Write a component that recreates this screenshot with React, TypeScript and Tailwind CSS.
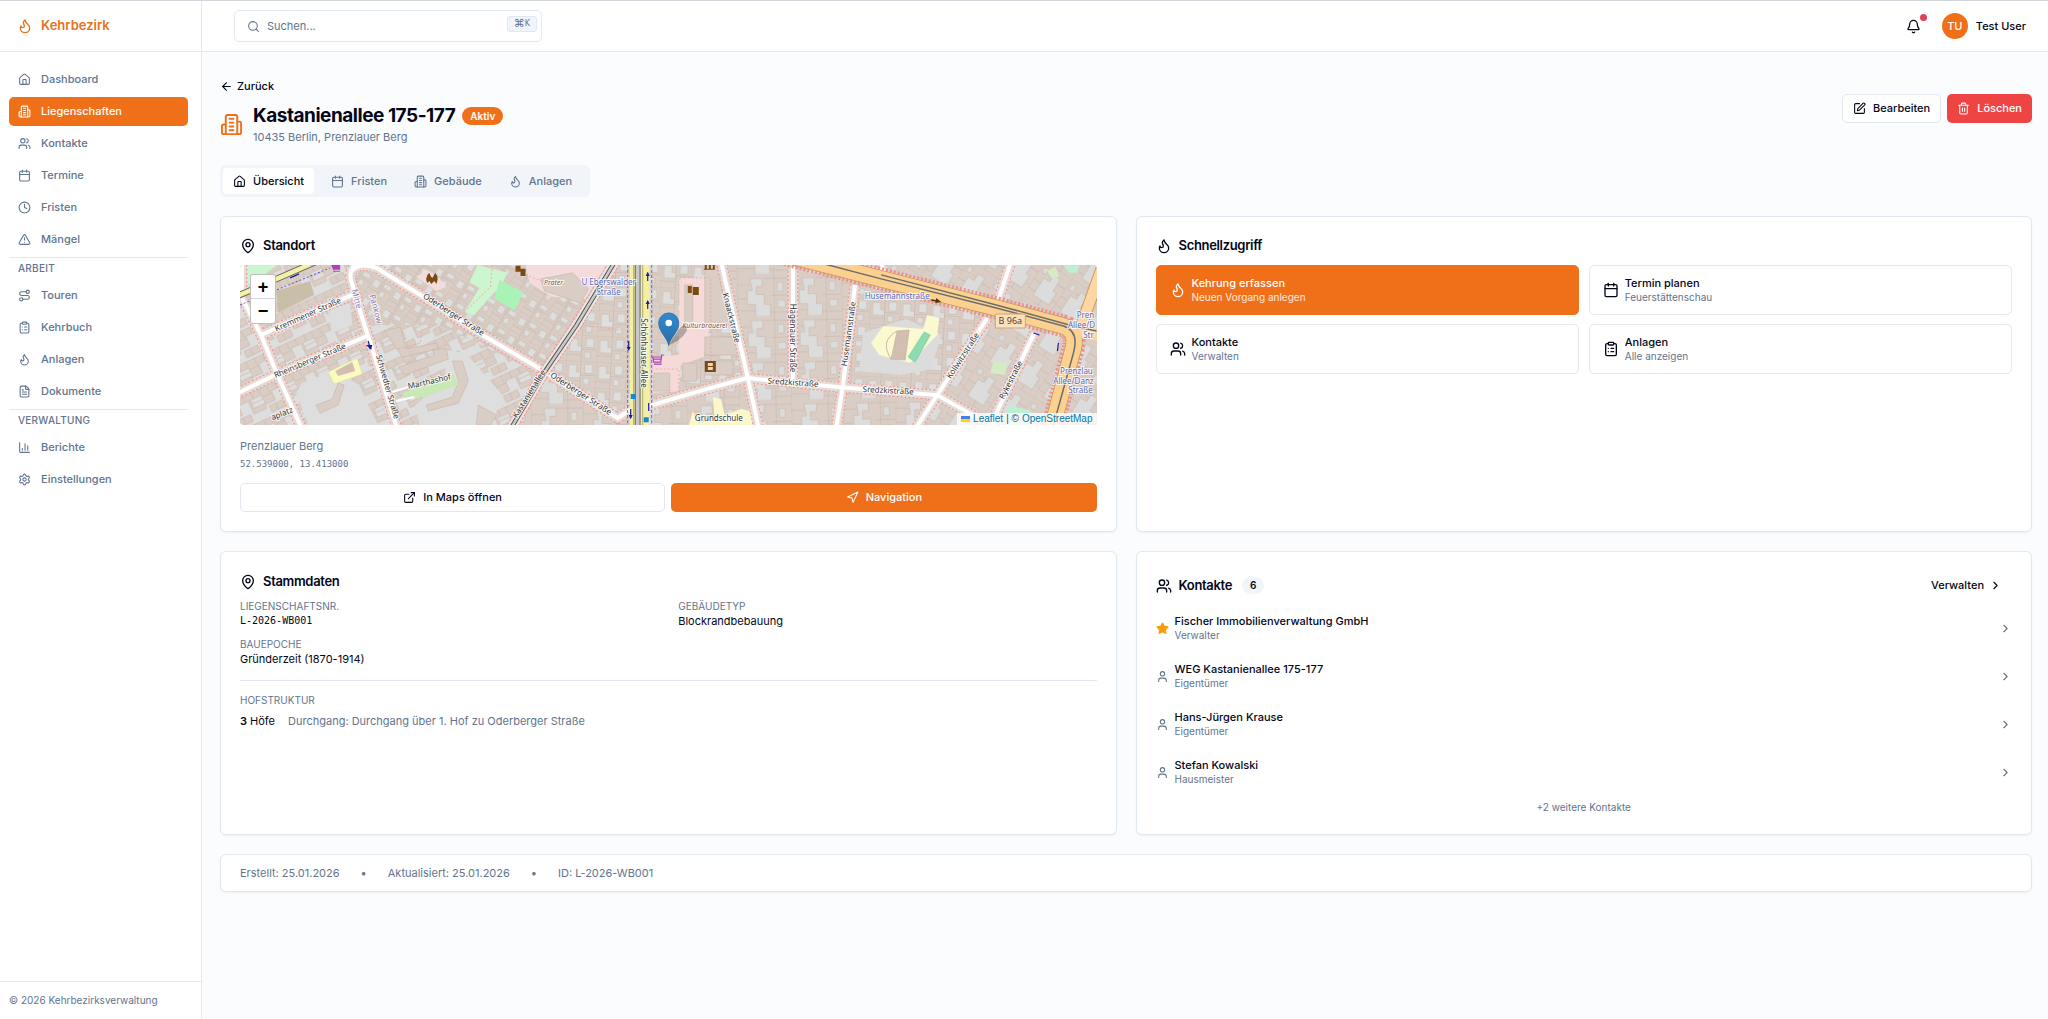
import React from 'react';
import {
  ArrowLeft, Bell, Calendar, ChartColumn, ChevronRight, ClipboardList, Clock, ExternalLink, FileText,
  Flame, House, MapPin, Navigation, Route, Search, Settings, SquarePen, Star, Trash2, TriangleAlert, User, Users,
} from 'lucide-react';

type Icon = React.ComponentType<{ className?: string }>;

function Building({ className }: { className?: string }) {
  return (
    <svg viewBox="0 0 24 24" fill="none" stroke="currentColor" strokeWidth="2" strokeLinecap="round" strokeLinejoin="round" className={className} aria-hidden="true">
      <path d="M6 22V4a2 2 0 0 1 2-2h8a2 2 0 0 1 2 2v18Z" />
      <path d="M6 12H4a2 2 0 0 0-2 2v6a2 2 0 0 0 2 2h2" />
      <path d="M18 9h2a2 2 0 0 1 2 2v9a2 2 0 0 1-2 2h-2" />
      <path d="M10 6h4M10 10h4M10 14h4M10 18h4" />
    </svg>
  );
}

const navGroups: { title?: string; items: { label: string; icon: Icon; active?: boolean }[] }[] = [
  {
    items: [
      { label: 'Dashboard', icon: House },
      { label: 'Liegenschaften', icon: Building, active: true },
      { label: 'Kontakte', icon: Users },
      { label: 'Termine', icon: Calendar },
      { label: 'Fristen', icon: Clock },
      { label: 'Mängel', icon: TriangleAlert },
    ],
  },
  {
    title: 'ARBEIT',
    items: [
      { label: 'Touren', icon: Route },
      { label: 'Kehrbuch', icon: ClipboardList },
      { label: 'Anlagen', icon: Flame },
      { label: 'Dokumente', icon: FileText },
    ],
  },
  {
    title: 'VERWALTUNG',
    items: [
      { label: 'Berichte', icon: ChartColumn },
      { label: 'Einstellungen', icon: Settings },
    ],
  },
];

function Sidebar() {
  return (
    <aside className="flex w-[202px] shrink-0 flex-col border-r border-slate-200 bg-white">
      <div className="flex h-[51px] items-center gap-2 border-b border-slate-200 px-[17px] text-[#e8711c]">
        <Flame className="size-4" />
        <span className="text-[13px] font-semibold">Kehrbezirk</span>
      </div>
      <nav className="flex-1 pt-[13px] pr-[13px] pl-[9px]">
        {navGroups.map((g, i) => (
          <div key={i} className={i ? 'mt-[3px] border-t border-slate-200' : ''}>
            {g.title && <h2 className="mb-[3px] pl-[9px] text-[10px] leading-5 font-medium tracking-wide text-slate-500">{g.title}</h2>}
            <ul className="flex flex-col gap-[3px]">
              {g.items.map(({ label, icon: I, active }) => (
                <li key={label}>
                  <a href="#" className={`flex h-[29px] items-center gap-[10px] rounded-[5px] px-[9px] text-[11px] font-medium ${active ? 'bg-[#f0701a] text-white' : 'text-slate-500'}`}>
                    <I className="size-[13px]" />
                    {label}
                  </a>
                </li>
              ))}
            </ul>
          </div>
        ))}
      </nav>
      <div className="border-t border-slate-200 px-[9px] py-3 text-[10px] leading-[13px] text-slate-500">© 2026 Kehrbezirksverwaltung</div>
    </aside>
  );
}

function Header() {
  return (
    <header className="flex h-[51px] items-center justify-between border-b border-slate-200 bg-white pr-[22px] pl-8">
      <label className="flex h-8 w-[308px] items-center gap-[7px] rounded-[5px] border border-slate-200 bg-white pr-1 pl-3 text-slate-500">
        <Search className="size-[13px]" />
        <input aria-label="Suchen" placeholder="Suchen..." className="min-w-0 flex-1 text-[11px] outline-none placeholder:text-slate-500" />
        <kbd className="mb-1 flex h-4 items-center rounded-[3px] border border-slate-200 bg-slate-100 px-[6px] font-['DejaVu_Sans',monospace] text-[11px] text-slate-500">⌘<span className="text-[8px]">K</span></kbd>
      </label>
      <div className="flex items-center gap-[19px]">
        <button aria-label="Benachrichtigungen" className="relative p-[2px]">
          <Bell className="size-[15px]" />
          <span className="absolute -top-[3px] -right-[4px] size-[7px] rounded-full bg-[#e0405a]" />
        </button>
        <button className="flex items-center gap-2 text-[11px] font-medium">
          <span className="flex size-[26px] items-center justify-center rounded-full bg-[#f0701a] text-white">TU</span>
          Test User
        </button>
      </div>
    </header>
  );
}

function Card({ children, className = '' }: { children: React.ReactNode; className?: string }) {
  return <section className={`rounded-[6px] border border-slate-200 bg-white px-[19px] shadow-xs ${className}`}>{children}</section>;
}

function CardTitle({ icon: I, children }: { icon: Icon; children: React.ReactNode }) {
  return (
    <h2 className="flex h-5 items-center gap-[7px] text-[13px] font-semibold tracking-tight">
      <I className="size-4" />
      {children}
    </h2>
  );
}

const streets = [
  'M2 -4L2 33L21 70L37 109L62 164',
  'M21 70L112 30',
  'M-4 129L37 109L127 71',
  'M118 -4Q108 4 111 16L122 53L134 90L157 164',
  'M112 6Q118 -3 136 3L185 33L242 70L305 107L377 153L389 145L411 140L455 127L506 113L596 122L696 130L735 152',
  'M480 -4L507 113L518 164',
  'M552 2L552 116',
  'M614 20L602 120L595 164',
  'M746 53L696 130L674 164',
  'M770 -4L756 38',
  'M793 68L754 150L750 164',
  'M640 -4L642 8',
];

const blocks: { d: string; fill: string }[] = [
  { d: 'M0 0H120L111 16L134 90L157 164H0Z', fill: 'url(#west)' },
  { d: 'M120 0H375L302 110L272 164H157L134 90L111 16Z', fill: 'url(#diag)' },
  { d: 'M157 164L134 90L128 60L200 60L302 110L272 164Z', fill: 'url(#west)' },
  { d: 'M375 0H480L507 113L377 153L302 110Z', fill: 'url(#grid)' },
  { d: 'M480 0H620L614 20L602 120L506 113Z', fill: 'url(#court)' },
  { d: 'M614 10L746 53L696 130L602 120Z', fill: 'url(#grid)' },
  { d: 'M272 164L305 107L377 153L506 113L696 130L674 164Z', fill: 'url(#court)' },
  { d: 'M600 0H860V160H674L696 130L746 53Z', fill: 'url(#east)' },
];

function Label({ x, y, r = 0, children, fill = '#333', size = 8, italic }: { x: number; y: number; r?: number; children: string; fill?: string; size?: number; italic?: boolean }) {
  return (
    <text transform={`translate(${x} ${y}) rotate(${r})`} textAnchor="middle" dominantBaseline="middle" fontSize={size} fontStyle={italic ? 'italic' : 'normal'} fill={fill} stroke="#fff" strokeOpacity="0.75" strokeWidth="2" paintOrder="stroke" fontFamily="'Noto Sans', sans-serif">
      {children}
    </text>
  );
}

function CityMap() {
  return (
    <svg viewBox="0 0 855 160" preserveAspectRatio="xMidYMid slice" className="block h-full w-full" role="img" aria-label="Karte Prenzlauer Berg">
      <defs>
        <pattern id="west" width="36" height="30" patternUnits="userSpaceOnUse" patternTransform="rotate(-25)">
          <path fill="#dedede" d="M0 0h36v30H0z" />
          <path fill="#d9cdc5" stroke="#c7b6aa" strokeWidth=".6" d="M0 0h36v7H24v9h12v5H22V7H11v10H0zM3 20h15v7H3z" />
          <path fill="none" stroke="#c7b6aa" strokeWidth=".6" d="M9 0v7M18 0v7M28 0v7M0 9h11M24 11h12M10 20v7" />
        </pattern>
        <pattern id="diag" width="24" height="21" patternUnits="userSpaceOnUse" patternTransform="rotate(31)">
          <path fill="#d9cdc5" d="M0 0h24v21H0z" />
          <path fill="#dedede" stroke="#c7b6aa" strokeWidth=".6" d="M3 5h7v8H3zM14 4h8v5h-8zM14 13h5v6h-5z" />
          <path fill="none" stroke="#c7b6aa" strokeWidth=".6" d="M0 0h24M12 0v21M0 16h12M0 0v21M12 11h12" />
        </pattern>
        <pattern id="grid" width="30" height="26" patternUnits="userSpaceOnUse" patternTransform="rotate(3)">
          <path fill="#d9cdc5" d="M0 0h30v26H0z" />
          <path fill="#dedede" stroke="#c7b6aa" strokeWidth=".6" d="M3 4h8v7h4v6H3zM19 3h8v9h-8zM18 17h6v6h-6z" />
          <path fill="none" stroke="#c7b6aa" strokeWidth=".6" d="M0 0h30M15 0v26M0 20h15M0 0v26M15 14h15" />
        </pattern>
        <pattern id="court" width="52" height="42" patternUnits="userSpaceOnUse" patternTransform="translate(496 10) rotate(-1)">
          <path fill="#d9cdc5" d="M0 0h52v42H0z" />
          <path fill="#dcdcdc" stroke="#c7b6aa" strokeWidth=".6" d="M13 4h12v8h-6v8h8v10h6v12H18V30h-8V16h5zM40 8h6v9h-6zM40 26h8v7h-8z" />
          <path fill="none" stroke="#c7b6aa" strokeWidth=".6" d="M0 0v42M0 10h13M0 24h10M0 36h18M26 4h26M33 21h19M33 38h19M37 0v42" />
        </pattern>
        <pattern id="east" width="40" height="32" patternUnits="userSpaceOnUse" patternTransform="rotate(-57)">
          <path fill="#d9cdc5" d="M0 0h40v32H0z" />
          <path fill="#dcdcdc" stroke="#c7b6aa" strokeWidth=".6" d="M6 8h20v7h8v8H20v4H6zM30 3h6v5h-6z" />
          <path fill="none" stroke="#c7b6aa" strokeWidth=".6" d="M0 0h40M0 0v32M10 0v8M20 0v8M30 15v-4M0 18h6M12 27v5M28 23v9" />
        </pattern>
        <linearGradient id="pin" x1="0" y1="0" x2="0" y2="1">
          <stop offset="0" stopColor="#2f8bd0" />
          <stop offset="1" stopColor="#2a6da6" />
        </linearGradient>
      </defs>
      <path fill="#e0dfdf" d="M0 0h855v160H0z" />
      {blocks.map((b) => <path key={b.d} d={b.d} fill={b.fill} />)}

      {/* open ground and apartment slabs west of Schwedter Straße and south of Oderberger */}
      <path fill="#dedede" d="M62 118L98 104L118 120L140 164H70L56 128ZM205 85L225 88L262 130L250 164H180L175 140L205 118ZM88 45L110 38L112 60L92 68Z" />
      <path fill="#d9cdc5" stroke="#c7b6aa" strokeWidth=".6" d="M76 140L92 134L98 118L104 120L98 140L80 148ZM144 66L160 62L166 84L196 78L198 84L162 92ZM158 102L194 90L192 84L206 84L208 94L164 110ZM212 96L222 96L228 116L218 138L188 146L186 140L212 132L218 116ZM238 140L256 150L250 160H236Z" />
      <path fill="#c9f5cf" d="M0 0H38L20 12L4 22L0 22Z" />
      <path fill="#c9bfa9" d="M36 26L70 16L74 30L38 48Z" />
      <path fill="#fbfbc0" stroke="#e0dca0" strokeWidth=".6" d="M88 107L117 93L122 109L94 119Z" />
      <path fill="#d3bfb2" d="M95 106L112 97L115 106L98 111Z" />
      <path fill="#cdf5cf" d="M237 0L267 8L262 18L234 50L224 47L239 23L229 17Z" />
      <path fill="#a8f3b5" d="M259 15L283 27L274 45L254 34Z" />
      <path fill="#c9e8b5" d="M163 128L213 109L218 120L184 132L164 134Z" />
      <path fill="#f5dcdc" d="M285 0H366L345 34L312 32L289 18ZM186 5Q200 12 206 22L196 26L176 12Z" />
      <path fill="#d9cdc5" stroke="#c7b6aa" strokeWidth=".6" d="M300 14L332 8L348 24L340 38L304 26Z" />
      <path fill="#f6dada" d="M439 13H470V56L463 92L440 100L438 126L411 128V92L438 90Z" />
      <path fill="#d9cdc5" stroke="#c7b6aa" strokeWidth=".6" d="M444 20h8v40h-8zM464 96h28v14h-28zM413 108h16v18h-16zM442 98h14v18h-14zM464 0h12l12 60h-24zM464 72h34l5 18h-39z" />
      <path fill="#fbf7c9" d="M472 132L480 134L484 150L500 144L510 146L512 160H448L452 146L458 158L474 154Z" />
      <path fill="#dcdcdc" d="M622 68L665 54L700 70L690 104L660 110L618 106Z" />
      <path fill="#fbf9d0" d="M642 61L682 64L686 50L698 53L696 70L669 98L638 90L630 78Z" />
      <path fill="#d3bfb2" stroke="#bda99a" strokeWidth=".6" d="M656 66L668 65L664 95L650 94Z" />
      <path fill="none" stroke="#bda99a" strokeWidth=".8" d="M656 66Q638 76 650 94" />
      <path fill="#8fdcb2" stroke="#63c792" strokeWidth=".6" d="M683 67L689 70L674 97L667 92Z" />
      <path fill="#d5ebc5" d="M752 96L766 98L764 110L749 108ZM806 6L814 2L818 12L810 13Z" />
      <path fill="#bdf0d0" d="M822 2L838 0L836 8L828 8ZM768 140L790 146L788 160H762Z" />
      <path fill="none" stroke="#efa09c" strokeWidth=".8" strokeDasharray="2 2" d="M439 13H470V100M411 104H438V128M224 47L250 22L252 0M158 84L180 78L182 64M340 60L380 65M285 10L312 20" />

      {/* street bodies */}
      {streets.map((d) => <path key={d} d={d} fill="none" stroke="#efdedb" strokeWidth="10" />)}
      {streets.map((d) => <path key={`${d}a`} d={d} fill="none" stroke="#f0918e" strokeWidth="10.5" strokeDasharray="2 2" />)}
      {streets.map((d) => <path key={`${d}b`} d={d} fill="none" stroke="#e4dad6" strokeWidth="8.500" />)}
      {streets.map((d) => <path key={`${d}c`} d={d} fill="none" stroke="#fff" strokeWidth="4" />)}
      <path d="M152 127L168 122M156 136L174 132" stroke="#fff" strokeWidth="2" />

      {/* Bernauer Straße corner */}
      <path d="M0 30L70 0" stroke="#f4f0a6" strokeWidth="6" />
      <path d="M0 27L62 0M0 33L78 -1" stroke="#666" strokeWidth="1" fill="none" />
      <path d="M0 40L90 3" stroke="#6a4fc0" strokeWidth="1" strokeDasharray="2 2" />

      {/* Kastanienallee */}
      <path d="M376 -6L336 60L302 110L270 164" fill="none" stroke="#f0918e" strokeWidth="11" strokeDasharray="2 2" />
      <path d="M376 -6L336 60L302 110L270 164" fill="none" stroke="#ece4e1" strokeWidth="9" />
      <path d="M376 -6L336 60L302 110L270 164" fill="none" stroke="#555" strokeWidth="4.5" />
      <path d="M376 -6L336 60L302 110L270 164" fill="none" stroke="#ccc" strokeWidth="2.5" />

      {/* Danziger Straße */}
      <path d="M530 -14L640 14L755 43L822 61Q838 66 830 90L810 165" fill="none" stroke="#ef8e8a" strokeWidth="23" strokeDasharray="2 2" />
      <path d="M838 66L860 4" stroke="#c98b3c" strokeWidth="12" />
      <path d="M530 -14L640 14L755 43L822 61Q838 66 830 90L810 165" fill="none" stroke="#c89a5a" strokeWidth="17" />
      <path d="M826 62L860 70" stroke="#fcd6a4" strokeWidth="14" />
      <path d="M838 66L860 4" stroke="#fcd6a4" strokeWidth="10.5" />
      <path d="M530 -14L640 14L755 43L822 61Q838 66 830 90L810 165" fill="none" stroke="#fcd18f" strokeWidth="15.5" />
      <path d="M560 -7L640 14L755 43L822 61Q838 66 832 88L812 160M640 10L755 40L828 60L855 66" fill="none" stroke="#6d6d6d" strokeWidth="1.5" />

      {/* Schönhauser Allee */}
      <path d="M387 0V160M411 0V160" stroke="#7263c7" strokeWidth="1" strokeDasharray="3 2" />
      <path d="M399 -2V162" stroke="#f5efa4" strokeWidth="20" />
      <path d="M397 -2V162" stroke="#777" strokeWidth="6" />
      <path d="M397 -2V162" stroke="#c8c8c8" strokeWidth="3.5" />
      <path d="M393 0V160M402 0V160" stroke="#8b8a55" strokeWidth=".7" />
      <path fill="none" stroke="#1b1b9a" strokeWidth="1.2" d="M407 8v8M407 36v8M388 76v8M408 138v8M390 144v8M128 76l2 8M50 13l9-4M792 68l6 2M817 78l-1 8" />
      <path fill="#1b1b9a" d="M405 11l2-4 2 4zM405 39l2-4 2 4zM386 82l2 4 2-4zM388 150l2 4 2-4zM126 80l6 0-1 5z" />
      <path fill="#138ad0" d="M390 129h5v5h-5zM403 152h5v5h-5z" />

      {/* points of interest */}
      <g fill="#7a4a12">
        <path d="M187 18Q184 12 189 8Q190 12 192 13Q194 10 195 8Q199 13 196 19L194 16L191 19L189 16ZM275 1h5v6h-5zM280 4h5v7h-5zM447 21h4v7h-4zM452 22h6v8h-6z" />
        <path d="M464 96h11v11h-11z" />
        <path fill="#e5d8cc" d="M467 98h5v3h-5zM467 102h5v3h-5z" />
        <path d="M463 4h11v1h-11zM464 0h2v4h-2zM468 0h2v4h-2zM472 0h2v4h-2z" />
      </g>
      <path fill="none" stroke="#b43fb5" strokeWidth="1.2" d="M423 90h-2l-1 7h-7l-1-5h8M413 99h8M412 94h8" />
      <path fill="#b43fb5" d="M91 0h9v5h-7zM93 6h7v1h-7z" />

      <Label x={68} y={50} r={-24}>Kremmener Straße</Label>
      <Label x={70} y={96} r={-23}>Rheinsberger Straße</Label>
      <Label x={213} y={50} r={33}>Oderberger Straße</Label>
      <Label x={340} y={129} r={33}>Oderberger Straße</Label>
      <Label x={189} y={117} r={-13}>Marthashof</Label>
      <Label x={147} y={122} r={74}>Schwedter Straße</Label>
      <Label x={289} y={129} r={-58}>Kastanienallee</Label>
      <Label x={402} y={88} r={90}>Schönhauser Allee</Label>
      <Label x={490} y={53} r={76}>Knaackstraße</Label>
      <Label x={551} y={73} r={90}>Hagenauer Straße</Label>
      <Label x={608} y={69} r={-82}>Husemannstraße</Label>
      <Label x={552} y={118} r={4}>Sredzkistraße</Label>
      <Label x={647} y={126} r={3}>Sredzkistraße</Label>
      <Label x={722} y={91} r={-57}>Kollwitzstraße</Label>
      <Label x={770} y={115} r={-63}>Rykestraße</Label>
      <Label x={42} y={149} r={-22}>aplatz</Label>
      <Label x={478} y={154}>Grundschule</Label>
      <Label x={116} y={34} r={76} fill="#8778b4">Mitte</Label>
      <Label x={135} y={44} r={76} fill="#8778b4">Pankow</Label>
      <Label x={313} y={18} fill="#7c5a56" size={7} italic>Prater</Label>
      <Label x={464} y={61} fill="#7c5a56" size={7} italic>Kulturbrauerei</Label>
      <Label x={368} y={18} fill="#6069b8">U Eberswalder</Label>
      <Label x={368} y={28} fill="#6069b8">Straße</Label>
      <Label x={656} y={32} fill="#6069b8">Husemannstraße</Label>
      <Label x={844} y={51} fill="#6069b8">Pren</Label>
      <Label x={840} y={61} fill="#6069b8">Allee/D</Label>
      <Label x={847} y={71} fill="#6069b8">Str</Label>
      <Label x={835} y={107} fill="#6069b8">Prenzlau</Label>
      <Label x={832} y={117} fill="#6069b8">Allee/Danz</Label>
      <Label x={839} y={126} fill="#6069b8">Straße</Label>
      <path d="M690 35l6 1" stroke="#5c3300" strokeWidth="1.5" />
      <path d="M695 33l5 4-6 1z" fill="#5c3300" />
      <rect x="754" y="49" width="30" height="14" rx="1" fill="#fae0bd" stroke="#d2a571" />
      <text x="769" y="59" textAnchor="middle" fontSize="9" fill="#574028" fontFamily="'Noto Sans', sans-serif">B 96a</text>

      {/* marker with its shadow */}
      <path d="M428 80L440 62Q447 58 446 66Q440 76 428 80Z" fill="#000" opacity=".25" />
      <path d="M428 80.500C427 73 418 67 418 58A10 10 0 0 1 438 58C438 67 429 73 428 80.500Z" fill="url(#pin)" stroke="#2264a0" strokeWidth=".8" />
      <circle cx="428" cy="58" r="3.300" fill="#fff" />
    </svg>
  );
}

function LocationCard() {
  return (
    <Card className="flex flex-col pt-[19px] pb-[19px]">
      <CardTitle icon={MapPin}>Standort</CardTitle>
      <div className="relative mt-[9px] h-[160px] overflow-hidden rounded-[4px]">
        <CityMap />
        <div className="absolute top-[9px] left-[10px] flex w-[26px] flex-col overflow-hidden rounded-[3px] border border-black/25 bg-white font-['Liberation_Sans',sans-serif] text-[18px] leading-[24px] font-bold text-black">
          <button aria-label="Vergrößern" className="h-6 border-b border-gray-300">+</button>
          <button aria-label="Verkleinern" className="h-6">−</button>
        </div>
        <div className="absolute right-0 bottom-0 flex items-center gap-[3px] bg-white/80 px-1 font-['Liberation_Sans',sans-serif] text-[10px] leading-[12px] text-gray-700">
          <svg viewBox="0 0 12 8" className="h-[6px] w-[9px]" aria-hidden="true"><path fill="#4C7BE1" d="M0 0h12v4H0z" /><path fill="#FFD500" d="M0 4h12v4H0z" /></svg>
          <a href="#" className="text-[#0078a8]">Leaflet</a>
          <span>| ©</span>
          <a href="#" className="text-[#0078a8]">OpenStreetMap</a>
        </div>
      </div>
      <p className="mt-[13px] text-[11px] leading-4 text-slate-500">Prenzlauer Berg</p>
      <p className="mt-[3px] font-['DejaVu_Sans_Mono',monospace] text-[9px] leading-[14px] text-slate-500">52.539000, 13.413000</p>
      <div className="mt-3 grid grid-cols-2 gap-[6px] text-[11px] font-medium">
        <button className="flex h-[29px] items-center justify-center gap-[7px] rounded-[5px] border border-slate-200"><ExternalLink className="size-[13px]" />In Maps öffnen</button>
        <button className="flex h-[29px] items-center justify-center gap-[7px] rounded-[5px] bg-[#f0701a] text-white"><Navigation className="size-[13px]" />Navigation</button>
      </div>
    </Card>
  );
}

const actions: { label: string; sub: string; icon: Icon; primary?: boolean }[] = [
  { label: 'Kehrung erfassen', sub: 'Neuen Vorgang anlegen', icon: Flame, primary: true },
  { label: 'Termin planen', sub: 'Feuerstättenschau', icon: Calendar },
  { label: 'Kontakte', sub: 'Verwalten', icon: Users },
  { label: 'Anlagen', sub: 'Alle anzeigen', icon: ClipboardList },
];

function QuickActions() {
  return (
    <Card className="pt-[19px]">
      <CardTitle icon={Flame}>Schnellzugriff</CardTitle>
      <div className="mt-[9px] grid grid-cols-2 gap-x-[10px] gap-y-[9px]">
        {actions.map(({ label, sub, icon: I, primary }) => (
          <button key={label} className={`flex h-[50px] items-center gap-[6px] rounded-[5px] border px-[13px] text-left ${primary ? 'border-[#f0701a] bg-[#f0701a] text-white' : 'border-slate-200'}`}>
            <I className="size-[16px]" />
            <span className="flex flex-col">
              <span className="text-[11px] leading-[15px] font-medium">{label}</span>
              <span className={`text-[10px] leading-[13px] ${primary ? 'text-white/85' : 'text-slate-500'}`}>{sub}</span>
            </span>
          </button>
        ))}
      </div>
    </Card>
  );
}

function Field({ label, children, mono }: { label: string; children: React.ReactNode; mono?: boolean }) {
  return (
    <div>
      <dt className="text-[10px] leading-[14px] text-slate-500">{label}</dt>
      <dd className={mono ? "font-['DejaVu_Sans_Mono',monospace] text-[10px] leading-[16px]" : 'text-[11px] leading-[16px]'}>{children}</dd>
    </div>
  );
}

function MasterData() {
  return (
    <Card className="pt-5">
      <CardTitle icon={MapPin}>Stammdaten</CardTitle>
      <dl className="mt-[7px] grid grid-cols-2 gap-x-5 gap-y-[8px]">
        <Field label="LIEGENSCHAFTSNR." mono>L-2026-WB001</Field>
        <Field label="GEBÄUDETYP">Blockrandbebauung</Field>
        <Field label="BAUEPOCHE">Gründerzeit (1870-1914)</Field>
      </dl>
      <div className="mt-[13px] border-t border-slate-200 pt-[12px]">
        <h3 className="text-[10px] leading-[14px] text-slate-500">HOFSTRUKTUR</h3>
        <p className="mt-[6px] flex gap-[13px] text-[11px] leading-[16px]">
          <span><b className="font-semibold">3</b> Höfe</span>
          <span className="text-slate-500">Durchgang: Durchgang über 1. Hof zu Oderberger Straße</span>
        </p>
      </div>
    </Card>
  );
}

const contacts = [
  { name: 'Fischer Immobilienverwaltung GmbH', role: 'Verwalter', star: true },
  { name: 'WEG Kastanienallee 175-177', role: 'Eigentümer' },
  { name: 'Hans-Jürgen Krause', role: 'Eigentümer' },
  { name: 'Stefan Kowalski', role: 'Hausmeister' },
];

function Contacts() {
  return (
    <Card className="pt-[19px] pb-5">
      <div className="flex h-[29px] items-center justify-between pr-[10px]">
        <div className="flex items-center gap-[10px]">
          <CardTitle icon={Users}>Kontakte</CardTitle>
          <span className="rounded-full bg-slate-100 px-2 text-[10px] leading-[17px] font-semibold">6</span>
        </div>
        <a href="#" className="flex items-center gap-[5px] text-[11px] font-medium">Verwalten <ChevronRight className="size-[13px]" /></a>
      </div>
      <ul className="mt-[4px]">
        {contacts.map((c) => (
          <li key={c.name}>
            <a href="#" className="flex h-12 items-center gap-[6px]">
              {c.star ? <Star className="size-[13px] fill-[#f59e0b] text-[#f59e0b]" /> : <User className="size-[13px] text-slate-500" />}
              <span className="flex flex-1 flex-col">
                <span className="text-[11px] leading-[15px] font-medium">{c.name}</span>
                <span className="text-[10px] leading-[13px] text-slate-500">{c.role}</span>
              </span>
              <ChevronRight className="size-[13px] text-slate-500" />
            </a>
          </li>
        ))}
      </ul>
      <p className="pt-[5px] text-center text-[10px] leading-[13px] text-slate-500">+2 weitere Kontakte</p>
    </Card>
  );
}

const tabs: { label: string; icon: Icon; active?: boolean }[] = [
  { label: 'Übersicht', icon: House, active: true },
  { label: 'Fristen', icon: Calendar },
  { label: 'Gebäude', icon: Building },
  { label: 'Anlagen', icon: Flame },
];

export default function App() {
  return (
    <div className="flex min-h-screen border-t border-gray-300 bg-[#fbfcfe] font-['Inter',sans-serif] text-slate-950 antialiased">
      <Sidebar />
      <div className="flex min-w-0 flex-1 flex-col">
        <Header />
        <main className="flex flex-col pt-[26px] pr-4 pl-[18px]">
          <div className="flex items-center justify-between">
            <div>
              <a href="#" className="flex h-4 items-center gap-[4px] text-[11px] font-medium"><ArrowLeft className="size-[13px]" />Zurück</a>
              <div className="mt-[9px] flex items-center gap-[10px]">
                <Building className="size-[23px] text-[#f0701a]" />
                <div>
                  <div className="flex items-center gap-[7px]">
                    <h1 className="text-[19px] leading-[26px] font-bold tracking-tight">Kastanienallee 175-177</h1>
                    <span className="rounded-full bg-[#f0701a] px-2 text-[10px] leading-[18px] font-semibold text-white">Aktiv</span>
                  </div>
                  <p className="text-[11px] leading-4 text-slate-500">10435 Berlin, Prenzlauer Berg</p>
                </div>
              </div>
            </div>
            <div className="mb-[6px] flex gap-[6px] text-[11px] font-medium">
              <button className="flex h-[29px] items-center gap-[7px] rounded-[5px] border border-slate-200 bg-white px-[10px]"><SquarePen className="size-[13px]" />Bearbeiten</button>
              <button className="flex h-[29px] items-center gap-[7px] rounded-[5px] bg-[#ef4444] px-[10px] text-white"><Trash2 className="size-[13px]" />Löschen</button>
            </div>
          </div>
          <div role="tablist" className="mt-5 flex h-8 w-fit items-center gap-[7px] rounded-[5px] bg-slate-100 py-[3px] pr-2 pl-[3px]">
            {tabs.map(({ label, icon: I, active }) => (
              <button key={label} role="tab" aria-selected={!!active} className={`flex h-[26px] items-center gap-[7px] rounded-[4px] px-[10px] text-[11px] font-medium ${active ? 'bg-white' : 'text-slate-500'}`}>
                <I className="size-[13px]" />
                {label}
              </button>
            ))}
          </div>
          <div className="mt-[19px] grid grid-cols-2 gap-[19px]">
            <LocationCard />
            <QuickActions />
            <MasterData />
            <Contacts />
          </div>
          <Card className="mt-[19px] flex h-[38px] items-center gap-[21px] text-[11px] text-slate-500">
            <span>Erstellt: 25.01.2026</span>
            <span>•</span>
            <span>Aktualisiert: 25.01.2026</span>
            <span>•</span>
            <span>ID: L-2026-WB001</span>
          </Card>
        </main>
      </div>
    </div>
  );
}
